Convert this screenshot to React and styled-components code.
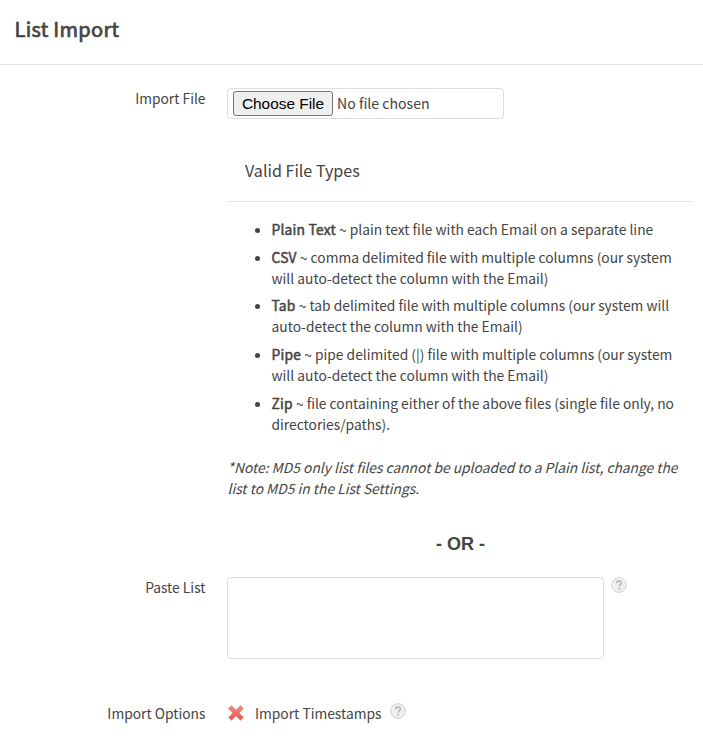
import React from 'react';
import styled, { createGlobalStyle } from 'styled-components';

const GlobalStyle = createGlobalStyle`
	* {
		box-sizing: border-box;
	}
	body {
		margin: 0;
		background: #fff;
		color: #444;
		font-family: "Noto Sans CJK SC", "Noto Sans", sans-serif;
		font-size: 13.8px;
		line-height: 21px;
	}
`;

const Page = styled.div`
	width: 100%;
	height: 743px;
	overflow: hidden;
`;

const Header = styled.header`
	height: 65px;
	padding: 14px 14.5px;
	border-bottom: 1px solid #e2e2e2;
`;

const Title = styled.h1`
	margin: 0;
	font-size: 20px;
	font-weight: 400;
	line-height: 30px;
	letter-spacing: 0.3px;
	-webkit-text-stroke: 0.7px #444;
`;

const Field = styled.div`
	display: grid;
	grid-template-columns: 205.5px 466px;
	column-gap: 21.5px;
	margin-top: ${({ $top }) => $top || 0}px;
`;

const Label = styled.label`
	text-align: right;
`;

const FileInput = styled.input`
	display: block;
	width: 277px;
	height: 31px;
	padding: 2px 5px;
	border: 1px solid #ddd;
	border-radius: 4px;
	color: #444;
	font-family: inherit;
	font-size: 14.1px;
	line-height: 21px;

	&::file-selector-button {
		width: 100px;
		height: 25px;
		margin: 0 4px 0 0;
		padding: 0;
		border: 1px solid #767676;
		border-radius: 3px;
		background: #efefef;
		color: #000;
		font-family: "Liberation Sans", Arial, sans-serif;
		font-size: 15.4px;
	}
`;

const TypesTitle = styled.h3`
	height: 62px;
	margin: 21px 0 0;
	padding: 18px 18px 0;
	border-bottom: 1px solid #e2e2e2;
	font-size: 16.1px;
	font-weight: 400;
	line-height: 24px;
`;

const TypeList = styled.ul`
	margin: 17px 0 0;
	padding: 0 0 0 44.5px;
`;

const TypeItem = styled.li`
	margin-bottom: 6.7px;

	b {
		font-weight: 400;
		letter-spacing: 0.22px;
		-webkit-text-stroke: 0.5px #444;
	}
`;

const Note = styled.p`
	margin: 22px 0 0;
	padding-left: 0.5px;
	font-style: italic;
`;

const Or = styled.div`
	margin-top: 33px;
	padding-left: 1px;
	text-align: center;
	font-family: "Liberation Sans", Arial, sans-serif;
	font-size: 18px;
	font-weight: 700;
	line-height: 24px;
`;

const PasteRow = styled.div`
	display: flex;
	align-items: flex-start;
	gap: 7px;
`;

const PasteArea = styled.textarea`
	display: block;
	width: 377px;
	height: 82px;
	border: 1px solid #ddd;
	border-radius: 4px;
	resize: none;
`;

const OptionRow = styled.div`
	display: flex;
	align-items: flex-start;
`;

const OptionText = styled.span`
	width: 145px;
	padding-left: 10px;
	white-space: nowrap;
`;

const Icon = styled.svg`
	display: block;
	flex: none;
	width: ${({ $size }) => $size || 16}px;
	height: ${({ $size }) => $size || 16}px;
	margin-top: ${({ $top }) => $top || 0}px;
`;

const types = [
	['Plain Text', 'plain text file with each Email on a separate line'],
	['CSV', 'comma delimited file with multiple columns (our system will auto-detect the column with the Email)'],
	['Tab', 'tab delimited file with multiple columns (our system will auto-detect the column with the Email)'],
	['Pipe', 'pipe delimited (|) file with multiple columns (our system will auto-detect the column with the Email)'],
	['Zip', 'file containing either of the above files (single file only, no directories/paths).'],
];

const Help = () => (
	<Icon viewBox="0 0 16 16">
		<circle cx="8" cy="8" r="7.4" fill="#efefef" stroke="#d4d4d4" />
		<path d="M5.7 6.2C5.7 4.8 6.6 4 8 4s2.4.8 2.4 2c0 1.6-2.1 1.7-2.1 3.5" fill="none" stroke="#bdbdbd" strokeWidth="1.8" />
		<rect x="7.3" y="10.6" width="2" height="2" fill="#bdbdbd" />
	</Icon>
);

const Cross = () => (
	<Icon viewBox="0 0 18 18" $size={18} $top={1}>
		<defs>
			<linearGradient id="cross" x1="0" y1="0" x2="0" y2="1">
				<stop offset="0" stopColor="#f08f88" />
				<stop offset="1" stopColor="#e6524e" />
			</linearGradient>
		</defs>
		<path
			d="M4.5 1.8L9 6.2l4.5-4.4 2.9 2.8L11.9 9l4.5 4.4-2.9 2.8L9 11.8l-4.5 4.4-2.9-2.8L6.1 9 1.6 4.6z"
			fill="url(#cross)"
			stroke="#ea7670"
			strokeWidth="0.8"
			strokeLinejoin="round"
		/>
	</Icon>
);

const App = () => {
	return (
		<Page>
			<GlobalStyle />
			<Header>
				<Title>List Import</Title>
			</Header>
			<Field $top={23}>
				<Label>Import File</Label>
				<div>
					<FileInput type="file" />
					<TypesTitle>Valid File Types</TypesTitle>
					<TypeList>
						{types.map(([name, text]) => (
							<TypeItem key={name}><b>{name}</b> ~ {text}</TypeItem>
						))}
					</TypeList>
					<Note>*Note: MD5 only list files cannot be uploaded to a Plain list, change the list to MD5 in the List Settings.</Note>
					<Or>- OR -</Or>
				</div>
			</Field>
			<Field $top={21}>
				<Label>Paste List</Label>
				<PasteRow>
					<PasteArea />
					<Help />
				</PasteRow>
			</Field>
			<Field $top={44}>
				<Label>Import Options</Label>
				<OptionRow>
					<Cross />
					<OptionText>Import Timestamps</OptionText>
					<Help />
				</OptionRow>
			</Field>
		</Page>
	);
}

export default App;
